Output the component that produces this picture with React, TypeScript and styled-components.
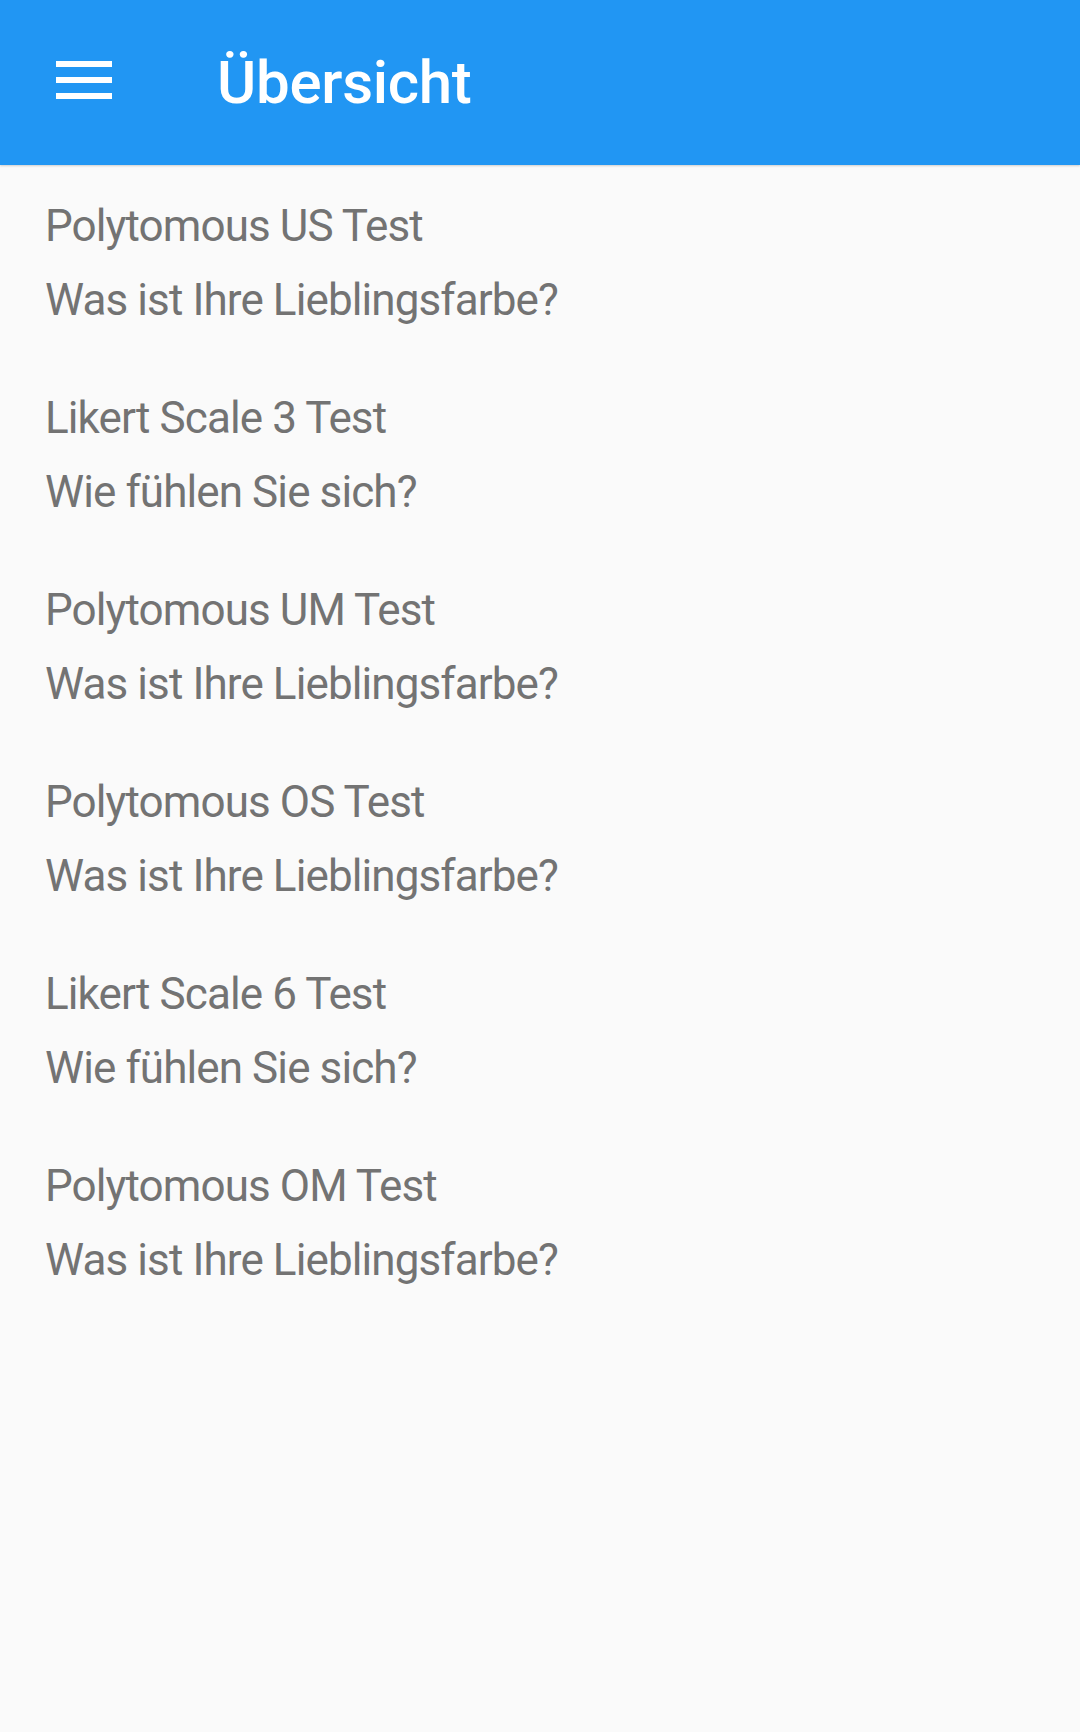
import React from "react";
import styled, { createGlobalStyle } from "styled-components";

const GlobalStyle = createGlobalStyle`
  html, body {
    margin: 0;
    padding: 0;
    background: #fafafa;
  }
  body {
    font-family: Roboto, "Noto Sans", "Liberation Sans", sans-serif;
    -webkit-font-smoothing: antialiased;
  }
`;

const Screen = styled.div`
  width: 1080px;
  min-height: 1732px;
  background: #fafafa;
  display: flex;
  flex-direction: column;
`;

const Toolbar = styled.header`
  height: 165px;
  background: #2196f3;
  display: flex;
  align-items: center;
  padding-left: 56px;
  box-sizing: border-box;
  box-shadow: 0 1px 2px rgba(0, 0, 0, 0.18);
  position: relative;
  z-index: 1;
`;

const MenuButton = styled.button`
  border: 0;
  padding: 0;
  background: transparent;
  display: flex;
  width: 56px;
  height: 38px;
  margin-bottom: 5px;
  cursor: pointer;
`;

const Title = styled.h1`
  margin: 1px 0 0 105px;
  font-family: Roboto, "Noto Sans", sans-serif;
  font-size: 60px;
  line-height: 60px;
  font-weight: 500;
  letter-spacing: -0.3px;
  color: #ffffff;
`;

const List = styled.ul`
  list-style: none;
  margin: 0;
  padding: 24px 0 0 0;
  display: flex;
  flex-direction: column;
  gap: 44px;
`;

const Item = styled.li`
  display: flex;
  flex-direction: column;
  padding-left: 45px;
`;

const Line = styled.span`
  font-family: Roboto, "Noto Sans", sans-serif;
  font-size: 44px;
  line-height: 74px;
  font-weight: 400;
  letter-spacing: -0.9px;
  color: #737373;
  white-space: nowrap;
`;

const MenuIcon = () => (
  <svg width="56" height="38" viewBox="0 0 56 38" aria-hidden="true">
    <rect x="0" y="0" width="56" height="6" fill="#fff" />
    <rect x="0" y="16" width="56" height="6" fill="#fff" />
    <rect x="0" y="32" width="56" height="6" fill="#fff" />
  </svg>
);

const items = [
  { title: "Polytomous US Test", question: "Was ist Ihre Lieblingsfarbe?" },
  { title: "Likert Scale 3 Test", question: "Wie fühlen Sie sich?" },
  { title: "Polytomous UM Test", question: "Was ist Ihre Lieblingsfarbe?" },
  { title: "Polytomous OS Test", question: "Was ist Ihre Lieblingsfarbe?" },
  { title: "Likert Scale 6 Test", question: "Wie fühlen Sie sich?" },
  { title: "Polytomous OM Test", question: "Was ist Ihre Lieblingsfarbe?" },
];

export default function App() {
  return (
    <>
      <GlobalStyle />
      <Screen>
        <Toolbar>
          <MenuButton aria-label="Menü">
            <MenuIcon />
          </MenuButton>
          <Title>Übersicht</Title>
        </Toolbar>
        <List>
          {items.map((it, i) => (
            <Item key={i}>
              <Line>{it.title}</Line>
              <Line>{it.question}</Line>
            </Item>
          ))}
        </List>
      </Screen>
    </>
  );
}
